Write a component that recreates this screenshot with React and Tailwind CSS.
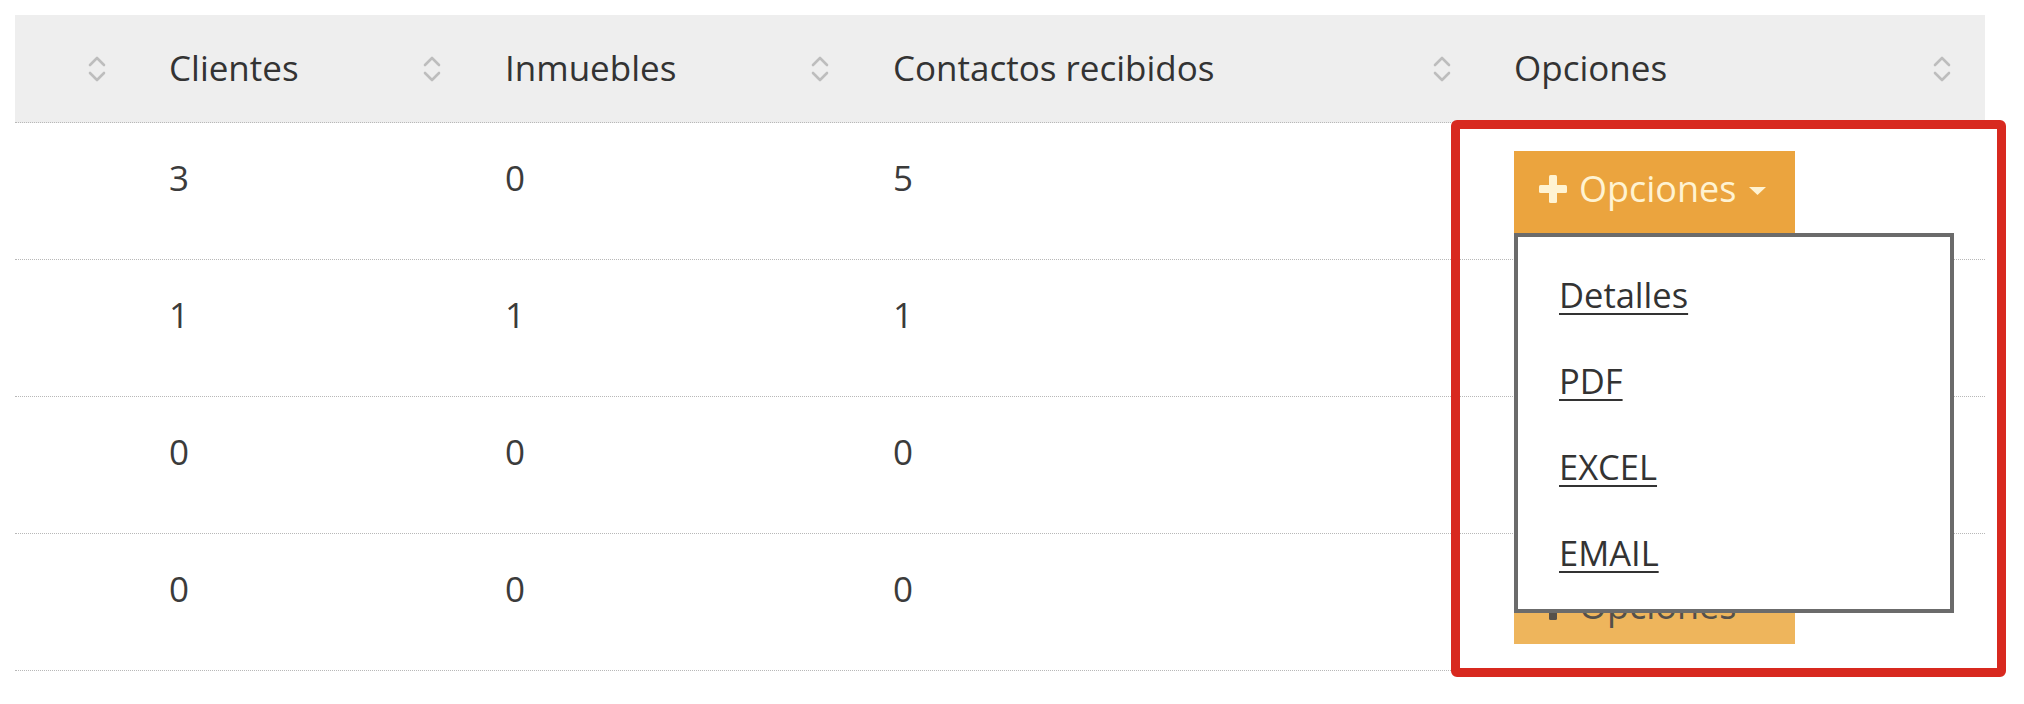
import React from "react";

function SortIcon() {
  return (
    <svg width="20" height="28" viewBox="0 0 20 28" fill="none">
      <polyline points="3,10 10,3 17,10" stroke="#bdbdbd" strokeWidth="2.6" strokeLinecap="round" strokeLinejoin="round" />
      <polyline points="3,18 10,25 17,18" stroke="#bdbdbd" strokeWidth="2.6" strokeLinecap="round" strokeLinejoin="round" />
    </svg>
  );
}

function PlusIcon({ color }) {
  return (
    <svg width="30" height="30" viewBox="0 0 30 30">
      <rect x="11" y="1" width="8" height="28" rx="1.5" fill={color} />
      <rect x="1" y="11" width="28" height="8" rx="1.5" fill={color} />
    </svg>
  );
}

function Caret({ color }) {
  return (
    <svg width="17" height="8" viewBox="0 0 17 8">
      <polygon points="0,0 17,0 8.5,8" fill={color} />
    </svg>
  );
}

function OptionsButton({ active, hidden }) {
  const color = active ? "#fff3d2" : "#55504a";
  return (
    <div
      className={
        "flex h-[82px] w-[281px] items-center pl-[24px] text-[36px] " +
        (active ? "bg-[#eba43e] pb-[6px] text-[#fff3d2]" : "bg-[#eeb55c] pt-[6px] text-[#55504a]") +
        (hidden ? " invisible" : "")
      }
    >
      <PlusIcon color={color} />
      <span className="ml-[11px] leading-none">Opciones</span>
      <span className="ml-[13px] mt-[4px]">
        <Caret color={color} />
      </span>
    </div>
  );
}

const widths = ["w-[118px]", "w-[336px]", "w-[388px]", "w-[621px]", "w-[507px]"];

const rows = [
  ["3", "0", "5"],
  ["1", "1", "1"],
  ["0", "0", "0"],
  ["0", "0", "0"],
];

export default function App() {
  return (
    <div className="relative h-[704px] w-[2024px] overflow-hidden bg-white pl-[15px] pt-[15px] font-['Open_Sans',sans-serif]">
      <div className="w-[1970px]">
        {/* header */}
        <div className="flex h-[108px] border-b border-dotted border-[#b8b8b8] bg-[#eeeeee] text-[35px] text-[#333333]">
          <div className={widths[0] + " flex items-center justify-end pr-[26px]"}>
            <SortIcon />
          </div>
          <div className={widths[1] + " flex items-center justify-between pl-[36px] pr-[27px]"}>
            <span>Clientes</span>
            <SortIcon />
          </div>
          <div className={widths[2] + " flex items-center justify-between pl-[36px] pr-[27px]"}>
            <span>Inmuebles</span>
            <SortIcon />
          </div>
          <div className={widths[3] + " flex items-center justify-between pl-[36px] pr-[26px]"}>
            <span>Contactos recibidos</span>
            <SortIcon />
          </div>
          <div className={widths[4] + " flex items-center justify-between pl-[36px] pr-[33px]"}>
            <span>Opciones</span>
            <SortIcon />
          </div>
        </div>

        {/* body */}
        {rows.map((r, i) => (
          <div
            key={i}
            className="flex h-[137px] border-b border-dotted border-[#b8b8b8] text-[35px] leading-[54px] text-[#3b3b3b]"
          >
            <div className={widths[0]} />
            <div className={widths[1] + " pl-[36px] pt-[28px]"}>{r[0]}</div>
            <div className={widths[2] + " pl-[36px] pt-[28px]"}>{r[1]}</div>
            <div className={widths[3] + " pl-[36px] pt-[28px]"}>{r[2]}</div>
            <div className={widths[4] + " pl-[36px] pt-[28px]"}>
              {i === 0 ? (
                <div className="relative z-10 w-[281px]">
                  <OptionsButton active />
                  <div className="absolute left-0 top-full h-[380px] w-[440px] border-[4px] border-[#6b6b6b] bg-white pt-[16px] text-[34.5px] text-[#333333]">
                    {["Detalles", "PDF", "EXCEL", "EMAIL"].map((t) => (
                      <div key={t} className="flex h-[86px] items-center pb-[2px] pl-[41px]">
                        <span className="leading-none underline decoration-[2px] underline-offset-[5px]">{t}</span>
                      </div>
                    ))}
                  </div>
                </div>
              ) : (
                <OptionsButton hidden={i === 1 || i === 2} />
              )}
            </div>
          </div>
        ))}
      </div>

      {/* red highlight annotation */}
      <div className="pointer-events-none absolute left-[1451px] top-[120px] z-20 h-[557px] w-[555px] rounded-[6px] border-[9px] border-[#d8291f]" />
    </div>
  );
}
